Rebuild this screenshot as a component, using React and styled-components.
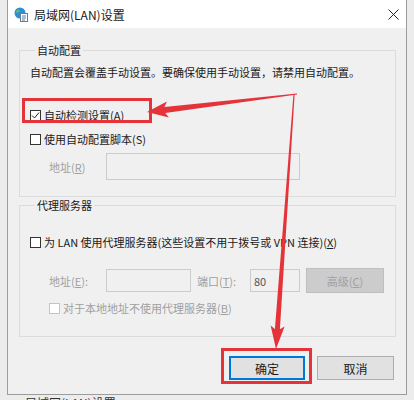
import React from "react";
import styled, { createGlobalStyle } from "styled-components";

const GlobalStyle = createGlobalStyle`
  body {
    margin: 0;
    background: #ececec;
    font-family: "Noto Sans CJK SC", "Noto Sans", sans-serif;
    color: #1a1a1a;
  }
`;

const Page = styled.div`
  position: relative;
  width: 414px;
  height: 400px;
  overflow: hidden;
  padding-left: 7px;
  box-sizing: border-box;
`;

const Window = styled.div`
  width: 400px;
  box-sizing: border-box;
  border: 1px solid #9c9c9c;
  border-top: none;
  background: #f0f0f0;
`;

const TitleBar = styled.div`
  height: 28px;
  background: #fff;
  display: flex;
  align-items: center;
  gap: 6px;
  padding-left: 6px;
  font-size: 12px;
`;

const Close = styled.div`
  margin-left: auto;
  width: 26px;
  height: 28px;
  display: flex;
  align-items: center;
  justify-content: center;
`;

const Body = styled.div`
  padding: 15px 10px 14px 11px;
`;

const Group = styled.fieldset`
  margin: ${p => p.mt || 0}px 0 0 0;
  padding: ${p => p.pad};
  border: 1px solid #dcdcdc;
  min-width: 0;
`;

const Legend = styled.legend`
  padding: 0 2px;
  margin-left: 5px;
  font-size: 11px;
  line-height: 14px;
`;

const Desc = styled.div`
  font-size: 11px;
  line-height: 16px;
`;

const CheckRow = styled.div`
  display: flex;
  align-items: center;
  gap: 3px;
  height: 18px;
  margin-top: ${p => p.mt || 0}px;
  padding-left: ${p => p.indent || 0}px;
  font-size: 11px;
  color: ${p => (p.disabled ? "#a0a0a0" : "#1a1a1a")};
`;

const Box = styled.span`
  width: 11px;
  height: 11px;
  box-sizing: border-box;
  border: 1px solid ${p => (p.disabled ? "#c4c4c4" : "#333")};
  background: #fff;
  display: flex;
  align-items: center;
  justify-content: center;
`;

const FieldRow = styled.div`
  display: flex;
  align-items: center;
  margin-top: ${p => p.mt || 0}px;
  padding-left: 19px;
  font-size: 11px;
`;

const FieldLabel = styled.span`
  width: ${p => p.w}px;
  margin-left: ${p => p.ml || 0}px;
  color: #a0a0a0;
`;

const Input = styled.div`
  width: ${p => p.w}px;
  height: ${p => p.h || 23}px;
  box-sizing: border-box;
  border: 1px solid #cccccc;
  background: #f0f0f0;
  color: #555;
  padding: 3px 0 0 3px;
  font-size: 11px;
`;

const Advanced = styled.div`
  width: 78px;
  height: 25px;
  margin-left: 6px;
  box-sizing: border-box;
  border: 1px solid #bfbfbf;
  background: #cccccc;
  color: #a0a0a0;
  display: flex;
  align-items: center;
  justify-content: center;
`;

const ButtonRow = styled.div`
  display: flex;
  justify-content: flex-end;
  gap: 12px;
  margin-top: 19px;
  padding-right: 2px;
`;

const Button = styled.div`
  width: ${p => p.w}px;
  height: 24px;
  box-sizing: border-box;
  background: #e1e1e1;
  border: ${p => (p.primary ? "2px solid #0078d7" : "1px solid #adadad")};
  display: flex;
  align-items: center;
  justify-content: center;
  font-size: 12px;
`;

const U = styled.span`
  text-decoration: underline;
`;

const Footer = styled.div`
  padding-left: 18px;
  margin-top: 1px;
  font-size: 12px;
  line-height: 14px;
  color: #333;
`;

const Overlay = styled.svg`
  position: absolute;
  left: 0;
  top: 0;
  pointer-events: none;
`;

const Check = ({ checked, disabled }) => (
  <Box disabled={disabled}>
    {checked && (
      <svg width="9" height="9" viewBox="0 0 9 9">
        <path d="M1 4.5 L3.5 7 L8 1.5" fill="none" stroke="#222" strokeWidth="1" />
      </svg>
    )}
  </Box>
);

const LanIcon = () => (
  <svg width="14" height="15" viewBox="0 0 14 15">
    <circle cx="6" cy="6" r="5.5" fill="#2d8fd5" />
    <path d="M2 4 Q4 2 6 3 Q5 6 3 6 Z M7 8 Q9 7 10 9 Q8 11 7 10 Z" fill="#6cc24a" />
    <rect x="6.5" y="6.5" width="7" height="8" fill="#fff" stroke="#6b7b8c" strokeWidth="1" />
    <path d="M8 9 H12 M8 11 H12 M8 13 H11" stroke="#5a7fa8" strokeWidth="1" />
  </svg>
);

const Annotations = () => (
  <Overlay width="414" height="400" viewBox="0 0 414 400">
    <rect x="23.5" y="99.5" width="127" height="22" fill="none" stroke="#e5333a" strokeWidth="3" />
    <rect x="222.5" y="349.5" width="88" height="33" fill="none" stroke="#e5333a" strokeWidth="3" />
    <polygon
      points="296.9,93.4 164.5,106.9 166.9,101.6 147,112 168.9,117.4 165.3,112.9 297.1,94.6"
      fill="#e5333a"
    />
    <polygon
      points="293.4,95 274.9,328.9 270.6,325.6 276,349 284.6,326.6 279.9,329.2 294.6,95"
      fill="#e5333a"
    />
  </Overlay>
);

const App = () => {
  return (
    <Page>
      <GlobalStyle />
      <Window>
        <TitleBar>
          <LanIcon />
          <span>局域网(LAN)设置</span>
          <Close>
            <svg width="11" height="11" viewBox="0 0 11 11">
              <path d="M0.5 0.5 L10.5 10.5 M10.5 0.5 L0.5 10.5" stroke="#222" strokeWidth="1" />
            </svg>
          </Close>
        </TitleBar>
        <Body>
          <Group pad="7px 10px 16px 10px">
            <Legend>自动配置</Legend>
            <Desc>自动配置会覆盖手动设置。要确保使用手动设置，请禁用自动配置。</Desc>
            <CheckRow mt={26}>
              <Check checked />
              <span>自动检测设置(A)</span>
            </CheckRow>
            <CheckRow mt={6}>
              <Check />
              <span>使用自动配置脚本(S)</span>
            </CheckRow>
            <FieldRow mt={5}>
              <FieldLabel w={57}>
                地址(<U>R</U>)
              </FieldLabel>
              <Input w={194} h={27} />
            </FieldRow>
          </Group>
          <Group mt={1} pad="21px 10px 19px 10px">
            <Legend>代理服务器</Legend>
            <CheckRow>
              <Check />
              <span>
                为 LAN 使用代理服务器(这些设置不用于拨号或 VPN 连接)(<U>X</U>)
              </span>
            </CheckRow>
            <FieldRow mt={17}>
              <FieldLabel w={57}>
                地址(<U>E</U>):
              </FieldLabel>
              <Input w={85} />
              <FieldLabel w={53} ml={6}>
                端口(<U>T</U>):
              </FieldLabel>
              <Input w={50}>80</Input>
              <Advanced>
                <span>
                  高级(<U>C</U>)
                </span>
              </Advanced>
            </FieldRow>
            <CheckRow mt={6} indent={19} disabled>
              <Check disabled />
              <span>
                对于本地地址不使用代理服务器(<U>B</U>)
              </span>
            </CheckRow>
          </Group>
          <ButtonRow>
            <Button w={76} primary>
              确定
            </Button>
            <Button w={77}>取消</Button>
          </ButtonRow>
        </Body>
      </Window>
      <Footer>局域网(LAN)设置</Footer>
      <Annotations />
    </Page>
  );
};

export default App;
